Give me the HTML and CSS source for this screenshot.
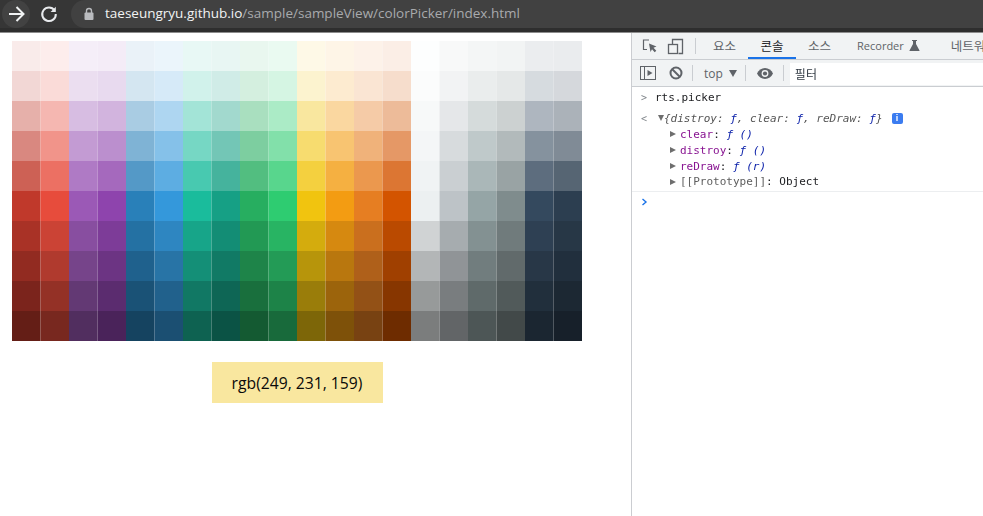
FILE: index.html
```html
<!DOCTYPE html>
<html lang="ko">
<head>
<meta charset="utf-8">
<title>Color Picker</title>
<link rel="stylesheet" href="styles.css">
</head>
<body>
<header class="browser-bar">
  <div class="nav-row">
    <span class="nav-btn nav-btn-active">
      <svg width="24" height="24" viewBox="0 0 24 24" fill="none" stroke="#f1f3f4" stroke-width="2"><path d="M5 12h14M12.500 5l7 7-7 7"/></svg>
    </span>
    <span class="nav-btn">
      <svg width="24" height="24" viewBox="0 0 24 24" fill="none" stroke="#e8eaed" stroke-width="2"><path d="M17.600 8.400A6.800 6.800 0 1 0 18.800 12"/><path d="M18.800 4.800v5.200h-5.200" fill="#e8eaed" stroke="none"/></svg>
    </span>
    <div class="omnibox">
      <svg class="lock" width="12" height="14" viewBox="0 0 12 14"><path d="M3.500 6V4a2.500 2.500 0 0 1 5 0v2" fill="none" stroke="#b9bbbe" stroke-width="1.400"/><rect x="1.500" y="5.500" width="9" height="7.500" rx="1" fill="#b9bbbe"/></svg>
      <span class="url"><span class="url-host">taeseungryu.github.io</span>/sample/sampleView/colorPicker/index.html</span>
    </div>
  </div>
</header>
<div class="split">
  <main class="page">
    <canvas id="palette" class="palette" width="570" height="300"></canvas>
    <div class="result-wrap"><div class="result">rgb(249, 231, 159)</div></div>
  </main>
  <aside class="devtools">
    <div class="tabbar">
      <span class="tool-icon tool-inspect">
        <svg width="18" height="18" viewBox="0 0 18 18" fill="none"><path d="M8 3H2.500v9.500H6" stroke="#5f6368" stroke-width="1.200"/><path d="M8 6.500l7.500 3-3 1.300 2.800 3-1.600 1.400-2.700-3-1.500 2.900z" fill="#5f6368"/></svg>
      </span>
      <span class="tool-icon tool-device">
        <svg width="18" height="18" viewBox="0 0 18 18" fill="none"><path d="M5.500 7V2.500h10v14h-4" stroke="#5f6368" stroke-width="1.300"/><rect x="1.500" y="7.500" width="9" height="9" stroke="#5f6368" stroke-width="1.300"/></svg>
      </span>
      <span class="sep sep-tabs"></span>
      <span class="tab tab-elements">요소</span>
      <span class="tab tab-active">콘솔</span>
      <span class="tab tab-sources">소스</span>
      <span class="tab tab-recorder">Recorder
        <svg width="11" height="11" viewBox="0 0 11 11"><path d="M3 0h5v1H7v3l3.500 6.500V11H.500v-.500L4 4V1H3z" fill="#5f6368"/></svg>
      </span>
      <span class="tab tab-network">네트워크</span>
    </div>
    <div class="filterbar">
      <span class="tool-icon tool-sidebar">
        <svg width="16" height="14" viewBox="0 0 16 14" fill="none"><rect x=".500" y=".500" width="15" height="13" stroke="#5f6368"/><path d="M4.500 1v12" stroke="#5f6368"/><path d="M7.500 4l5 3-5 3z" fill="#5f6368"/></svg>
      </span>
      <span class="tool-icon tool-clear">
        <svg width="14" height="14" viewBox="0 0 14 14" fill="none"><circle cx="7" cy="7" r="5.500" stroke="#5f6368" stroke-width="2"/><path d="M3 3l8 8" stroke="#5f6368" stroke-width="2"/></svg>
      </span>
      <span class="sep sep-clear"></span>
      <span class="context">top<svg width="8" height="7" viewBox="0 0 8 7"><path d="M0 0h8L4 7z" fill="#5f6368"/></svg></span>
      <span class="sep sep-context"></span>
      <span class="tool-icon tool-eye">
        <svg width="16" height="11" viewBox="0 0 16 11"><path d="M8 0C4.500 0 1.500 2.200 0 5.500 1.500 8.800 4.500 11 8 11s6.500-2.200 8-5.500C14.500 2.200 11.500 0 8 0z" fill="#5f6368"/><circle cx="8" cy="5.500" r="3.400" fill="#f1f3f4"/><circle cx="8" cy="5.500" r="2.100" fill="#5f6368"/></svg>
      </span>
      <span class="sep sep-eye"></span>
      <div class="filter-input">필터</div>
    </div>
    <div class="console">
      <div class="line line-input"><span class="gutter gutter-gt">&gt;</span><span class="code">rts.picker</span></div>
      <div class="line line-result">
        <span class="gutter gutter-lt">&lt;</span><span class="tri tri-down"></span>
        <span class="code summary"><i>{distroy: <b class="fn">ƒ</b>, clear: <b class="fn">ƒ</b>, reDraw: <b class="fn">ƒ</b>}</i></span><span class="info">i</span>
      </div>
      <div class="prop"><span class="tri"></span><span class="code"><span class="key">clear</span>: <i class="fn">ƒ ()</i></span></div>
      <div class="prop"><span class="tri"></span><span class="code"><span class="key">distroy</span>: <i class="fn">ƒ ()</i></span></div>
      <div class="prop"><span class="tri"></span><span class="code"><span class="key">reDraw</span>: <i class="fn">ƒ (r)</i></span></div>
      <div class="prop prop-last"><span class="tri"></span><span class="code"><span class="key-internal">[[Prototype]]</span>: Object</span></div>
      <div class="line line-prompt"><svg class="prompt" width="7" height="8" viewBox="0 0 7 8" fill="none"><path d="M1.500 1l3.500 3-3.500 3" stroke="#1a73e8" stroke-width="1.400"/></svg></div>
    </div>
  </aside>
</div>
<script src="palette.js"></script>
</body>
</html>
```
FILE: styles.css
```css
* { box-sizing: border-box; }
html, body { margin: 0; height: 100%; overflow: hidden; background: #fff; }
body { display: flex; flex-direction: column; font-family: "Open Sans", "Noto Sans CJK KR", sans-serif; }

.browser-bar { flex: none; height: 33px; background: #2e2e2e; border-bottom: 1px solid #8d8d8d; }
.nav-row { display: flex; align-items: center; height: 28px; background: #363636; padding-left: 2px; }
.nav-btn { width: 28px; height: 28px; border-radius: 50%; display: flex; align-items: center; justify-content: center; margin-right: 5px; }
.nav-btn-active { background: #424242; }
.omnibox { flex: 1; margin-left: 3px; height: 28px; border-radius: 14px 0 0 14px; background: #414141; display: flex; align-items: center; padding-left: 12px; }
.lock { margin-right: 10px; }
.url { font-size: 13.500px; color: #a8aaad; white-space: nowrap; margin-bottom: 2px; }
.url-host { color: #f1f3f4; }

.split { flex: 1; display: flex; min-height: 0; }
.page { flex: none; width: 631px; padding: 8px 0 0 12px; }
.palette { display: block; width: 570px; height: 300px; }
.result-wrap { width: 570px; display: flex; justify-content: center; margin-top: 21px; }
.result { width: 171px; height: 41px; background: #f9e79f; color: #0a0a0a; font-size: 15.700px; display: flex; align-items: center; justify-content: center; }

.devtools { flex: 1; min-width: 0; border-left: 1px solid #cbcdd1; display: flex; flex-direction: column; overflow: hidden; color: #303942; }
.tabbar, .filterbar { flex: none; display: flex; align-items: center; background: #f1f3f4; white-space: nowrap; }
.tabbar { height: 27px; border-bottom: 1px solid #cacdd1; padding-left: 9px; }
.filterbar { height: 27px; border-bottom: 1px solid #cacdd1; padding-left: 8px; }
.tool-icon { flex: none; display: flex; align-items: center; justify-content: center; }
.tool-inspect { width: 18px; margin-right: 8px; }
.tool-device { width: 18px; margin-right: 10px; }
.sep { flex: none; width: 1px; height: 16px; background: #cacdd1; }
.tab { flex: none; font-size: 12.500px; color: #5f6368; height: 26px; display: flex; align-items: center; gap: 5px; justify-content: center; border-bottom: 2px solid transparent; }
.tab-elements { margin-left: 17px; }
.tab-active { width: 48px; margin-left: 12px; color: #202124; border-bottom-color: #1a73e8; }
.tab-sources { margin-left: 12px; }
.tab-recorder { margin-left: 26px; font-size: 11px; }
.tab-network { margin-left: 31px; }
.tool-sidebar { width: 16px; margin-right: 13px; }
.tool-clear { width: 14px; margin-right: 9px; }
.context { flex: none; font-size: 12px; color: #5f6368; display: flex; align-items: center; gap: 6px; margin-left: 11px; margin-right: 8px; }
.tool-eye { width: 16px; margin: 0 10px 0 11px; }
.filter-input { flex: 1; align-self: stretch; margin: 3px 0 1px 6px; background: #fff; font-size: 12px; color: #303942; padding-left: 5px; display: flex; align-items: center; }

.console { flex: 1; font-family: "DejaVu Sans Mono", monospace; font-size: 11px; color: #202124; }
.line, .prop { display: flex; align-items: center; white-space: nowrap; }
.line-input { height: 21px; }
.line-result { height: 18px; padding-top: 2px; }
.gutter { flex: none; width: 10px; margin-left: 9px; color: #80868b; font-size: 10px; }
.code { display: inline-block; }
.line-input .code { margin-left: 4px; }
.tri { flex: none; width: 0; height: 0; border-left: 6px solid #6e6e6e; border-top: 3.500px solid transparent; border-bottom: 3.500px solid transparent; margin-right: 4px; }
.tri-down { border-left: 3.500px solid transparent; border-right: 3.500px solid transparent; border-top: 6px solid #6e6e6e; border-bottom: 0; margin: 0 0 0 7px; }
.summary { margin-left: 0; }
.summary i { font-style: italic; color: #555; }
.fn { font-weight: normal; color: #0d22aa; font-style: italic; }
.info { flex: none; width: 11px; height: 11px; margin-left: 9px; border-radius: 2px; background: #3b7cf0; color: #fff; font: bold 9px/11px "Liberation Sans", sans-serif; text-align: center; }
.prop { height: 16px; padding-left: 38px; }
.prop-last { height: 18px; padding-bottom: 2px; border-bottom: 1px solid #eceef0; }
.key { color: #881391; }
.key-internal { color: #5e5e5e; }
.line-prompt { height: 20px; padding-left: 9px; }
.prompt { display: block; }
```
FILE: palette.js
```js
var rows = [
  "F9EBEA FDEDEC F5EEF8 F4ECF7 EAF2F8 EBF5FB E8F8F5 E8F6F3 E9F7EF EAFAF1 FEF9E7 FEF5E7 FDF2E9 FBEEE6 FDFEFE F8F9F9 F4F6F6 F2F4F4 EBEDEF EAECEE",
  "F2D7D5 FADBD8 EBDEF0 E8DAEF D4E6F1 D6EAF8 D1F2EB D0ECE7 D4EFDF D5F5E3 FCF3CF FDEBD0 FAE5D3 F6DDCC FBFCFC F2F3F4 EAEDED E5E8E8 D6DBDF D5D8DC",
  "E6B0AA F5B7B1 D7BDE2 D2B4DE A9CCE3 AED6F1 A3E4D7 A2D9CE A9DFBF ABEBC6 F9E79F FAD7A0 F5CBA7 EDBB99 F7F9F9 E5E7E9 D5DBDB CCD1D1 AEB6BF ABB2B9",
  "D98880 F1948A C39BD3 BB8FCE 7FB3D5 85C1E9 76D7C4 73C6B6 7DCEA0 82E0AA F7DC6F F8C471 F0B27A E59866 F4F6F7 D7DBDD BFC9CA B2BABB 85929E 808B96",
  "CD6155 EC7063 AF7AC5 A569BD 5499C7 5DADE2 48C9B0 45B39D 52BE80 58D68D F4D03F F5B041 EB984E DC7633 F0F3F4 CACFD2 AAB7B8 99A3A4 5D6D7E 566573",
  "C0392B E74C3C 9B59B6 8E44AD 2980B9 3498DB 1ABC9C 16A085 27AE60 2ECC71 F1C40F F39C12 E67E22 D35400 ECF0F1 BDC3C7 95A5A6 7F8C8D 34495E 2C3E50",
  "A93226 CB4335 884EA0 7D3C98 2471A3 2E86C1 17A589 138D75 229954 28B463 D4AC0D D68910 CA6F1E BA4A00 D0D3D4 A6ACAF 839192 707B7C 2E4053 273746",
  "922B21 B03A2E 76448A 6C3483 1F618D 2874A6 148F77 117A65 1E8449 239B56 B7950B B9770E AF601A A04000 B3B6B7 909497 717D7E 616A6B 283747 212F3D",
  "7B241C 943126 633974 5B2C6F 1A5276 21618C 117864 0E6655 196F3D 1D8348 9A7D0A 9C640C 935116 873600 979A9A 797D7F 5F6A6A 515A5A 212F3C 1C2833",
  "641E16 78281F 512E5F 4A235A 154360 1B4F72 0E6251 0B5345 145A32 186A3B 7D6608 7E5109 784212 6E2C00 7B7D7D 626567 4D5656 424949 1B2631 17202A"
];
var ctx = document.getElementById("palette").getContext("2d");
rows.forEach(function (row, y) {
  row.split(" ").forEach(function (hex, x) {
    ctx.fillStyle = "#" + hex;
    ctx.fillRect(x * 28.5, y * 30, 28.5, 30);
  });
});
```
